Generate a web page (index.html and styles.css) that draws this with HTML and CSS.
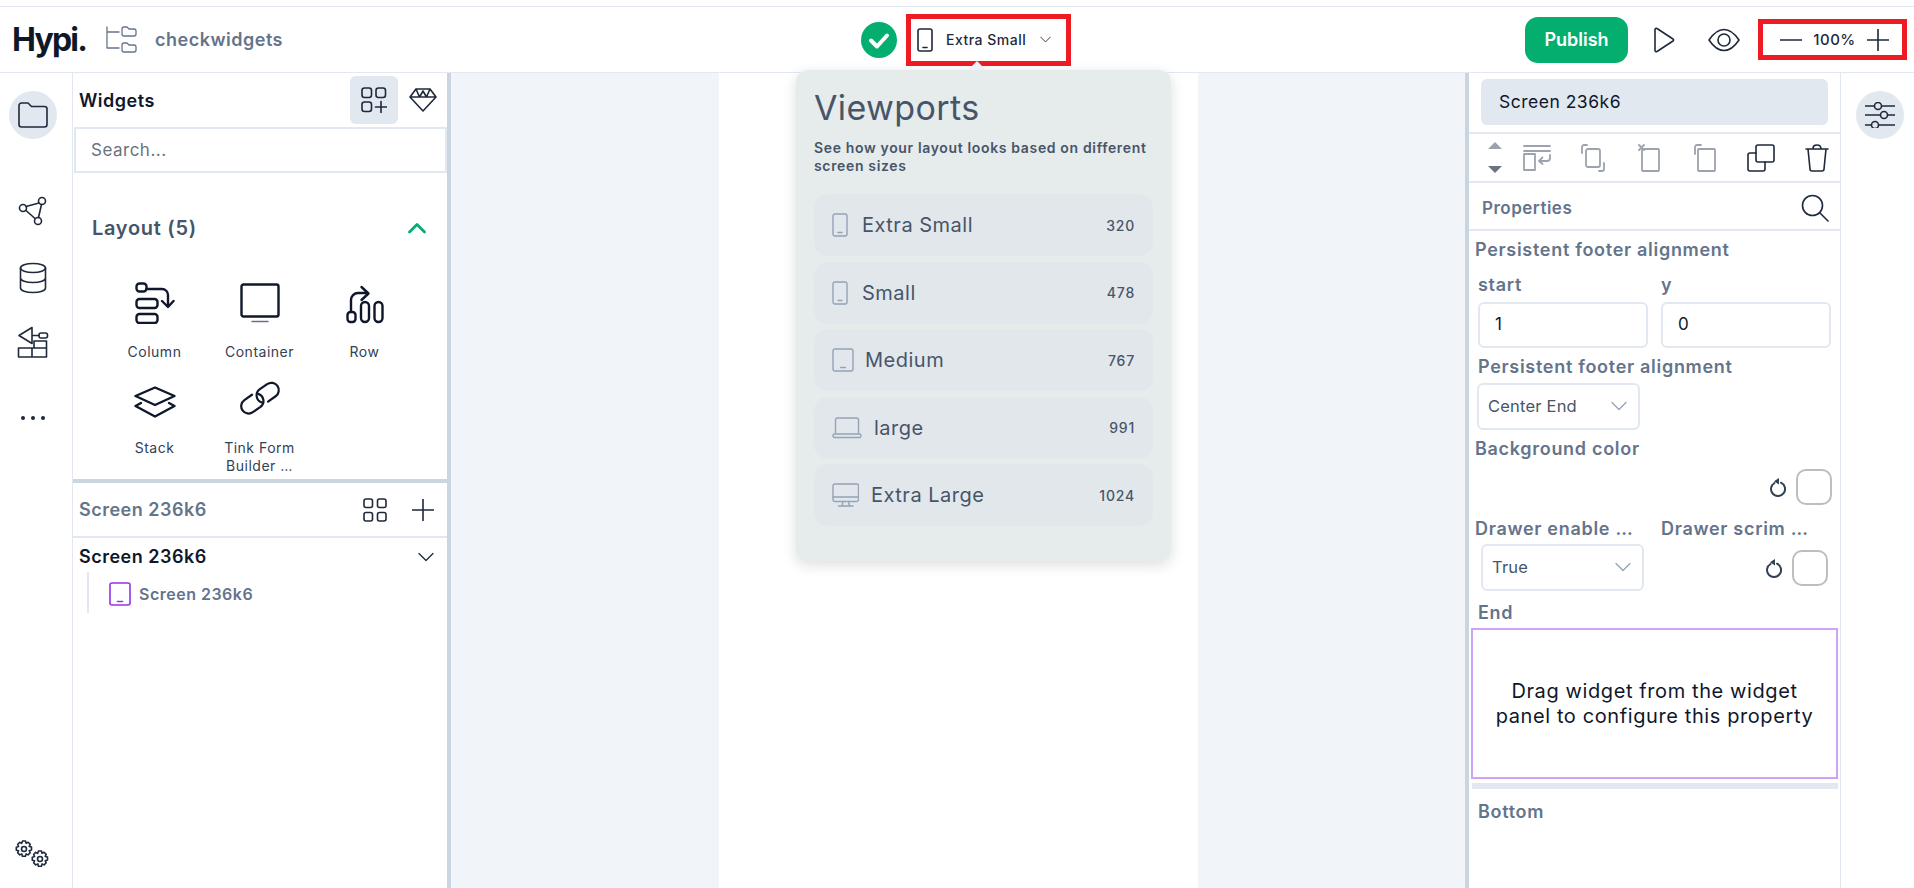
FILE: index.html
```html
<!DOCTYPE html>
<html lang="en">
<head>
    <meta charset="UTF-8">
    <title>Hypi Builder</title>
    <link rel="stylesheet" href="styles.css">
</head>
<body>
    <svg class="defs" width="0" height="0">
        <symbol id="phone" viewBox="0 0 16 24"><rect x="1" y="1" width="14" height="22" rx="2"/><path d="M6 19.500h4"/></symbol>
        <symbol id="tablet" viewBox="0 0 22 24"><rect x="1" y="1" width="20" height="22" rx="2"/><path d="M8.500 19.500h5"/></symbol>
        <symbol id="chev" viewBox="0 0 16 10"><path d="M1 1.500l7 7 7-7"/></symbol>
        <symbol id="reset" viewBox="0 0 18 20"><path d="M12 5.700A7 7 0 1 1 5.500 6"/><path fill="#334155" stroke="none" d="M10 1v6.500L5 4.200z"/></symbol>
    </svg>

    <div class="topline"></div>
    <header class="header">
        <div class="header-left">
            <span class="logo">Hypi.</span>
            <svg class="project-icon" width="32" height="28" viewBox="0 0 32 28"><path d="M2 1v21h12M2 6h12"/><path d="M17 3a2 2 0 0 1 2-2h3l2 2h5a2 2 0 0 1 2 2v3a2 2 0 0 1-2 2H19a2 2 0 0 1-2-2z"/><path d="M17 19a2 2 0 0 1 2-2h3l2 2h5a2 2 0 0 1 2 2v3a2 2 0 0 1-2 2H19a2 2 0 0 1-2-2z"/></svg>
            <span class="project-name">checkwidgets</span>
        </div>
        <div class="header-center">
            <svg class="check" width="36" height="36" viewBox="0 0 36 36"><circle cx="18" cy="18" r="18"/><path d="M10 18.500l6 6 10-11"/></svg>
            <div class="device-select">
                <svg class="ic-dark" width="16" height="24"><use href="#phone"/></svg>
                <span>Extra Small</span>
                <svg class="ic-dark thin" width="11" height="7"><use href="#chev"/></svg>
            </div>
        </div>
        <div class="header-right">
            <button class="publish">Publish</button>
            <svg class="ic-dark" width="22" height="26" viewBox="0 0 22 26"><path d="M2 2.500c0-1 1-1.500 2-1l16 10.500c.8.500.8 1.500 0 2L4 24.500c-1 .5-2 0-2-1z"/></svg>
            <svg class="ic-dark eye" width="32" height="24" viewBox="0 0 32 24"><path d="M1 12C6 4.500 11 1.500 16 1.500S26 4.500 31 12c-5 7.500-10 10.500-15 10.500S6 19.500 1 12z"/><circle cx="16" cy="12" r="6"/></svg>
            <div class="zoom-box">
                <svg class="ic-dark" width="22" height="22" viewBox="0 0 22 22"><path d="M0 11h22"/></svg>
                <span>100%</span>
                <svg class="ic-dark" width="22" height="22" viewBox="0 0 22 22"><path d="M0 11h22M11 0v22"/></svg>
            </div>
        </div>
    </header>

    <div class="main">
        <nav class="rail">
            <div class="rail-active">
                <svg class="ic-dark" width="30" height="26" viewBox="0 0 30 26"><path d="M1 3.500a2.500 2.500 0 0 1 2.500-2.500h6.500l3.500 3.500h13a2.500 2.500 0 0 1 2.500 2.500v15.500a2.500 2.500 0 0 1-2.500 2.500h-23a2.500 2.500 0 0 1-2.500-2.500z"/></svg>
            </div>
            <svg class="ic-dark rail-graph" width="30" height="30" viewBox="0 0 30 30"><circle cx="24" cy="5" r="3.500"/><circle cx="5" cy="12" r="3.500"/><circle cx="20" cy="25" r="3.500"/><path d="M21 7L8 10.500M23.500 8.500L20.500 21.500M8 14.500L17 22.500"/></svg>
            <svg class="ic-dark rail-db" width="28" height="32" viewBox="0 0 28 32"><ellipse cx="14" cy="6" rx="12.500" ry="4.500"/><path d="M1.500 6v20c0 2.500 5.500 4.500 12.500 4.500s12.500-2 12.500-4.500V6M1.500 16c0 2.500 5.500 4.500 12.500 4.500s12.500-2 12.500-4.500"/></svg>
            <svg class="ic-dark rail-deploy" width="32" height="32" viewBox="0 0 32 32"><path d="M15 1.500L2 9.500l13 8zM15 9.500h7"/><rect x="22" y="7" width="8.500" height="5" rx="2"/><path d="M1.500 22h28v9h-28zM15 22v9M17 22v-7h12.500v7"/></svg>
            <div class="rail-dots"><i></i><i></i><i></i></div>
            <svg class="ic-dark rail-gear" width="36" height="28" viewBox="0 0 36 28"><g id="gear"><circle cx="9" cy="9" r="2.500"/><path d="M7.500 1h3l.6 2.200 2-.9 2.100 2.100-1 2 2.300.7v3l-2.300.6 1 2.100-2.100 2.100-2-1-.7 2.300h-3l-.6-2.300-2.100 1-2.100-2.100 1-2.100L1.300 10.200v-3l2.300-.7-1-2 2.100-2.100 2 .9z"/></g><use href="#gear" x="16" y="10"/></svg>
        </nav>

        <aside class="widgets">
            <div class="widgets-head">
                <span class="widgets-title">Widgets</span>
                <div class="tab-active">
                    <svg class="ic-dark" width="26" height="26" viewBox="0 0 26 26"><rect x="1" y="1" width="9.500" height="9.500" rx="2.500"/><rect x="15" y="1" width="9.500" height="9.500" rx="2.500"/><rect x="1" y="15" width="9.500" height="9.500" rx="2.500"/><path d="M14.500 20h11M20 14.500v11"/></svg>
                </div>
                <svg class="ic-dark diamond" width="28" height="24" viewBox="0 0 28 24"><path d="M7 1h14l6 8-13 14L1 9zM1 9h26M7 1l3.500 8L14 3l3.500 6L21 1"/></svg>
            </div>
            <div class="search">Search...</div>
            <div class="section-head">
                <span>Layout (5)</span>
                <svg class="chev-up" width="18" height="12" viewBox="0 0 18 12"><path d="M1.500 10L9 2.500 16.500 10"/></svg>
            </div>
            <div class="widget-grid">
                <div class="widget">
                    <svg class="ic-widget" width="40" height="42" viewBox="0 0 40 42"><rect x="1.500" y="1.500" width="10" height="8" rx="3"/><rect x="1.500" y="17" width="21" height="9" rx="3"/><rect x="1.500" y="32" width="21" height="9" rx="3"/><path d="M11.500 7H27a6 6 0 0 1 6 6v11M27 19l6 6 5.500-6"/></svg>
                    <span>Column</span>
                </div>
                <div class="widget">
                    <svg class="ic-widget" width="40" height="42" viewBox="0 0 40 40"><rect x="1.500" y="1.500" width="37" height="32" rx="2"/><path class="thin" d="M12 38.500h16"/></svg>
                    <span>Container</span>
                </div>
                <div class="widget">
                    <svg class="ic-widget" width="38" height="42" viewBox="0 -5 38 42"><rect x="1.500" y="25" width="8" height="10" rx="3"/><rect x="15" y="15" width="8" height="20" rx="4"/><rect x="28.500" y="15" width="8" height="20" rx="4"/><path d="M5 24V13a7 7 0 0 1 7-7h10M15.500 0l7 6.500-7 6.500"/></svg>
                    <span>Row</span>
                </div>
                <div class="widget">
                    <svg class="ic-widget" width="42" height="42" viewBox="0 -7 42 42"><path d="M21 1.500L40.500 10 21 19 1.500 10zM7 17l-5.500 3L21 30.500 40.500 20 35 17"/></svg>
                    <span>Stack</span>
                </div>
                <div class="widget">
                    <svg class="ic-widget" width="50" height="42" viewBox="-2 -1 54 42"><g transform="rotate(-35 25 18)"><path d="M20 10H10a8 8 0 0 0 0 16h10a8 8 0 0 0 6-13"/><path d="M30 26h10a8 8 0 0 0 0-16H30a8 8 0 0 0-6 13"/></g></svg>
                    <span>Tink Form<br>Builder …</span>
                </div>
            </div>
            <div class="h-split"></div>
            <div class="screens-head">
                <span>Screen 236k6</span>
                <svg class="ic-dark" width="24" height="24" viewBox="0 0 24 24"><rect x="1" y="1" width="8.500" height="8.500" rx="2"/><rect x="14.500" y="1" width="8.500" height="8.500" rx="2"/><rect x="1" y="14.500" width="8.500" height="8.500" rx="2"/><rect x="14.500" y="14.500" width="8.500" height="8.500" rx="2"/></svg>
                <svg class="ic-dark plus" width="22" height="22" viewBox="0 0 22 22"><path d="M0 11h22M11 0v22"/></svg>
            </div>
            <div class="tree-row">
                <span>Screen 236k6</span>
                <svg class="ic-dark thin" width="16" height="10"><use href="#chev"/></svg>
            </div>
            <div class="tree-child">
                <svg class="ic-purple" width="22" height="24"><use href="#tablet"/></svg>
                <span>Screen 236k6</span>
            </div>
        </aside>

        <div class="v-split"></div>

        <section class="canvas">
            <div class="preview"></div>
            <div class="popover">
                <h2>Viewports</h2>
                <p>See how your layout looks based on different screen sizes</p>
                <div class="vp-item">
                    <svg class="ic-vp gap-phone" width="16" height="24"><use href="#phone"/></svg>
                    <span class="vp-name">Extra Small</span><span class="vp-size">320</span>
                </div>
                <div class="vp-item">
                    <svg class="ic-vp gap-phone" width="16" height="24"><use href="#phone"/></svg>
                    <span class="vp-name">Small</span><span class="vp-size">478</span>
                </div>
                <div class="vp-item">
                    <svg class="ic-vp" width="22" height="24"><use href="#tablet"/></svg>
                    <span class="vp-name">Medium</span><span class="vp-size">767</span>
                </div>
                <div class="vp-item">
                    <svg class="ic-vp gap-wide" width="30" height="22" viewBox="0 0 30 22"><path d="M3.500 16V3a2 2 0 0 1 2-2h19a2 2 0 0 1 2 2v13"/><rect x="1" y="17" width="28" height="3.500" rx="1.500"/></svg>
                    <span class="vp-name">large</span><span class="vp-size">991</span>
                </div>
                <div class="vp-item">
                    <svg class="ic-vp gap-wide" width="27" height="24" viewBox="0 0 27 24"><rect x="1" y="1" width="25.500" height="17.500" rx="2"/><path d="M1 14h25.500M11 18.500l-1 4.500M16.500 18.500l1 4.500M6.500 23h14.500"/></svg>
                    <span class="vp-name">Extra Large</span><span class="vp-size">1024</span>
                </div>
            </div>
        </section>

        <div class="v-split"></div>

        <aside class="props">
            <div class="name-wrap"><div class="name-box">Screen 236k6</div></div>
            <div class="toolbar">
                <div class="updown"><i class="up"></i><i class="down"></i></div>
                <svg class="ic-gray" width="28" height="28" viewBox="0 0 28 28"><path d="M1 2h26M1 7h26"/><rect x="1" y="10" width="11" height="16"/><path d="M27 11v3a3 3 0 0 1-3 3h-8M19.500 13.500L16 17l3.500 3"/></svg>
                <svg class="ic-gray" width="24" height="28" viewBox="0 0 24 28"><rect x="5" y="5" width="14" height="18" rx="2"/><path d="M6 1H3a2 2 0 0 0-2 2v6M18 27h3a2 2 0 0 0 2-2v-6"/></svg>
                <svg class="ic-gray" width="22" height="28" viewBox="0 0 22 28"><rect x="4" y="5" width="17" height="22" rx="1"/><path d="M1 1l5 5M6 1L1 6"/></svg>
                <svg class="ic-gray" width="22" height="28" viewBox="0 0 22 28"><rect x="4" y="5" width="17" height="22" rx="1"/><path d="M7 1H3a2 2 0 0 0-2 2v7"/></svg>
                <svg class="ic-dark" width="28" height="28" viewBox="0 0 28 28"><rect x="9" y="1" width="18" height="17" rx="2"/><path d="M9 9H3a2 2 0 0 0-2 2v14a2 2 0 0 0 2 2h13a2 2 0 0 0 2-2v-7"/></svg>
                <svg class="ic-dark" width="24" height="28" viewBox="0 0 24 28"><path d="M1 5h22M3 5l2 20a2 2 0 0 0 2 2h10a2 2 0 0 0 2-2l2-20M8 5c0-3 1-4 4-4s4 1 4 4"/></svg>
            </div>
            <div class="props-head">
                <span>Properties</span>
                <svg class="ic-dark" width="28" height="28" viewBox="0 0 28 28"><circle cx="11.500" cy="11.500" r="10"/><path d="M19 19l8 8"/></svg>
            </div>
            <div class="field-title">Persistent footer alignment</div>
            <div class="two-col">
                <div>
                    <div class="sub-label">start</div>
                    <div class="input">1</div>
                </div>
                <div>
                    <div class="sub-label">y</div>
                    <div class="input">0</div>
                </div>
            </div>
            <div class="sub-label second">Persistent footer alignment</div>
            <div class="select">
                <span>Center End</span>
                <svg class="ic-slate" width="16" height="10"><use href="#chev"/></svg>
            </div>
            <div class="field-title bg-title">Background color</div>
            <div class="color-row">
                <svg class="ic-reset" width="18" height="20"><use href="#reset"/></svg>
                <div class="swatch"></div>
            </div>
            <div class="drawer-labels">
                <span>Drawer enable …</span>
                <span>Drawer scrim …</span>
            </div>
            <div class="drawer-row">
                <div class="select">
                    <span>True</span>
                    <svg class="ic-slate" width="16" height="10"><use href="#chev"/></svg>
                </div>
                <svg class="ic-reset" width="18" height="20"><use href="#reset"/></svg>
                <div class="swatch"></div>
            </div>
            <div class="sub-label end-label">End</div>
            <div class="drop-box">Drag widget from the widget panel to configure this property</div>
            <div class="drop-bar"></div>
            <div class="sub-label bottom-label">Bottom</div>
        </aside>

        <nav class="rail-right">
            <div class="rail-active">
                <svg class="ic-dark" width="30" height="26" viewBox="0 0 30 26"><path d="M0 4h9M17 4h13M0 13h15M23 13h7M0 23h6M14 23h16"/><circle cx="13" cy="4" r="3.500"/><circle cx="19" cy="13" r="3.500"/><circle cx="10" cy="23" r="3.500"/></svg>
            </div>
        </nav>
    </div>
</body>
</html>
```

FILE: styles.css
```css
* {
    box-sizing: border-box;
}
body {
    margin: 0;
    height: 888px;
    overflow: hidden;
    font-family: Inter, "Liberation Sans", sans-serif;
    letter-spacing: 0.5px;
    background-color: #fff;
    color: #0f172a;
}
svg {
    display: block;
    flex-shrink: 0;
    fill: none;
    stroke-linecap: round;
    stroke-linejoin: round;
}
.defs {
    position: absolute;
}
.ic-dark {
    stroke: #1e293b;
    stroke-width: 1.6;
}
.ic-dark.thin {
    stroke-width: 1.3;
}
.ic-gray {
    stroke: #9ca3af;
    stroke-width: 1.8;
}
.ic-slate {
    stroke: #94a3b8;
    stroke-width: 1.3;
}
.ic-reset {
    stroke: #334155;
    stroke-width: 2;
}
.ic-purple {
    stroke: #9333ea;
    stroke-width: 1.6;
}
.ic-vp {
    stroke: #94a3b8;
    stroke-width: 1.4;
}
.ic-widget {
    stroke: #0f172a;
    stroke-width: 2.4;
}
.ic-widget .thin {
    stroke: #64748b;
    stroke-width: 1.5;
}

/* Header */
.topline {
    height: 7px;
    border-bottom: 1px solid #e2e8f0;
}
.header {
    display: flex;
    align-items: center;
    height: 66px;
    border-bottom: 1px solid #e2e8f0;
}
.header-left {
    display: flex;
    align-items: center;
    width: 861px;
    padding-left: 12px;
}
.logo {
    font-size: 32px;
    font-weight: 700;
    letter-spacing: -1.8px;
    color: #0f172a;
}
.project-icon {
    margin-left: 19px;
    stroke: #64748b;
    stroke-width: 1.3;
}
.project-name {
    margin-left: 18px;
    font-size: 18px;
    font-weight: 600;
    color: #64748b;
}
.header-center {
    display: flex;
    align-items: center;
    gap: 9px;
}
.check circle {
    fill: #04ae6e;
}
.check path {
    stroke: #fff;
    stroke-width: 4;
}
.device-select {
    display: flex;
    align-items: center;
    width: 165px;
    height: 52px;
    padding-left: 6px;
    border: 5px solid #ed1c24;
    font-size: 14px;
    font-weight: 500;
    color: #1e293b;
}
.device-select span {
    margin-left: 13px;
    margin-right: 14px;
}
.header-right {
    display: flex;
    align-items: center;
    margin-left: auto;
    padding-right: 7px;
}
.publish {
    width: 103px;
    height: 46px;
    margin-right: 25px;
    border: none;
    border-radius: 13px;
    background-color: #04ae6e;
    color: #fff;
    font-family: inherit;
    font-size: 18px;
    font-weight: 600;
}
.eye {
    margin-left: 33px;
    margin-right: 18px;
}
.zoom-box {
    display: flex;
    align-items: center;
    justify-content: space-between;
    width: 149px;
    height: 41px;
    padding: 0 13px 0 17px;
    border: 5px solid #ed1c24;
    font-size: 15px;
    font-weight: 500;
    color: #1e293b;
}

.main {
    display: flex;
    height: 815px;
}

/* Left rail */
.rail {
    display: flex;
    flex-direction: column;
    flex-shrink: 0;
    align-items: center;
    width: 73px;
    padding: 18px 6px 20px 0;
    border-right: 1px solid #e2e8f0;
}
.rail-active {
    display: flex;
    align-items: center;
    justify-content: center;
    width: 48px;
    height: 48px;
    border-radius: 50%;
    background-color: #e2e8f0;
}
.rail-graph {
    margin-top: 57px;
}
.rail-db {
    margin-top: 36px;
}
.rail-deploy {
    margin-top: 32px;
}
.rail-dots {
    display: flex;
    gap: 6px;
    margin-top: 58px;
}
.rail-dots i {
    width: 4px;
    height: 4px;
    border-radius: 50%;
    background-color: #1e293b;
}
.rail-gear {
    margin-top: auto;
}

/* Widgets panel */
.widgets {
    flex-shrink: 0;
    width: 374px;
}
.widgets-head {
    display: flex;
    align-items: center;
    height: 54px;
    padding-left: 6px;
}
.widgets-title {
    flex: 1;
    font-size: 18px;
    font-weight: 600;
    color: #0f172a;
}
.tab-active {
    display: flex;
    align-items: center;
    justify-content: center;
    width: 48px;
    height: 48px;
    margin-right: 11px;
    border-radius: 6px;
    background-color: #e2e8f0;
}
.diamond {
    margin-right: 10px;
}
.search {
    height: 46px;
    margin-left: 1px;
    padding: 11px 0 0 15px;
    border: 2px solid #e2e8f0;
    font-size: 17px;
    color: #6b7280;
}
.section-head {
    display: flex;
    align-items: center;
    justify-content: space-between;
    height: 38px;
    margin-top: 36px;
    padding: 0 21px 0 19px;
    font-size: 20px;
    font-weight: 600;
    letter-spacing: 0.7px;
    color: #475569;
}
.chev-up {
    stroke: #04ae6e;
    stroke-width: 2.800;
}
.widget-grid {
    display: grid;
    grid-template-columns: repeat(3, 105px);
    grid-auto-rows: 97px;
    height: 197px;
    margin: 35px 0 0 29px;
}
.widget {
    display: flex;
    flex-direction: column;
    align-items: center;
    gap: 19px;
    font-size: 14px;
    line-height: 18px;
    color: #334155;
    text-align: center;
}
.widget:nth-child(n+4) {
    gap: 18px;
}
.h-split {
    height: 4px;
    background-color: #cbd5e1;
}
.screens-head {
    display: flex;
    align-items: center;
    height: 55px;
    padding-left: 6px;
    border-bottom: 2px solid #e2e8f0;
    font-size: 18px;
    font-weight: 600;
    color: #64748b;
}
.screens-head span {
    flex: 1;
}
.plus {
    margin-left: 25px;
    margin-right: 13px;
}
.tree-row {
    display: flex;
    align-items: center;
    justify-content: space-between;
    height: 31px;
    margin-top: 3px;
    padding: 0 13px 0 6px;
    font-size: 18px;
    font-weight: 600;
    color: #0f172a;
}
.tree-child {
    display: flex;
    align-items: center;
    gap: 8px;
    height: 41px;
    margin-left: 14px;
    padding: 3px 0 0 20px;
    border-left: 2px solid #e2e8f0;
    font-size: 16px;
    font-weight: 600;
    color: #64748b;
}

.v-split {
    flex-shrink: 0;
    width: 4px;
    background-color: #cbd5e1;
}

/* Canvas + popover */
.canvas {
    position: relative;
    display: flex;
    justify-content: center;
    flex: 1;
    background-color: #f1f5f9;
}
.preview {
    width: 479px;
    background-color: #fff;
}
.popover {
    position: absolute;
    left: 345px;
    top: -3px;
    width: 375px;
    height: 491px;
    padding: 16px 18px 0;
    border-radius: 12px;
    background-color: #e6ebec;
    box-shadow: 0 4px 14px rgba(15, 23, 42, 0.14);
}
.popover::before {
    content: "";
    position: absolute;
    left: 172px;
    top: -18px;
    border: 9px solid transparent;
    border-bottom-color: #eef2f7;
}
.popover h2 {
    margin: 0;
    font-size: 34px;
    line-height: 44px;
    font-weight: 400;
    letter-spacing: 0.4px;
    color: #475569;
}
.popover p {
    margin: 9px 0 19px;
    font-size: 14px;
    line-height: 18px;
    font-weight: 600;
    letter-spacing: 0.65px;
    color: #475569;
}
.vp-item {
    display: flex;
    align-items: center;
    gap: 11px;
    height: 62px;
    margin-bottom: 5.600px;
    padding: 0 18px;
    border-radius: 14px;
    background-color: #e2e7ec;
}
.gap-phone {
    margin-right: 3px;
}
.gap-wide {
    margin-right: 1px;
}
.vp-name {
    flex: 1;
    font-size: 20px;
    color: #475569;
}
.vp-size {
    font-size: 14px;
    font-weight: 500;
    letter-spacing: 0.8px;
    color: #475569;
}

/* Properties panel */
.props {
    flex-shrink: 0;
    width: 372px;
    border-right: 1px solid #e2e8f0;
}
.name-wrap {
    height: 61px;
    padding: 6px 12px 0 12px;
    border-bottom: 2px solid #e2e8f0;
}
.name-box {
    height: 46px;
    padding-left: 18px;
    border-radius: 6px;
    background-color: #e2e8f0;
    font-size: 17.500px;
    line-height: 46px;
    color: #0f172a;
}
.toolbar {
    display: grid;
    grid-template-columns: 29px repeat(6, 56px);
    justify-items: center;
    align-items: center;
    height: 49px;
    padding-left: 11px;
    border-bottom: 2px solid #e2e8f0;
}
.updown {
    display: flex;
    flex-direction: column;
    gap: 17px;
}
.updown i {
    width: 0;
    height: 0;
    border-left: 7px solid transparent;
    border-right: 7px solid transparent;
}
.up {
    border-bottom: 7px solid #9ca3af;
}
.down {
    border-top: 7px solid #6b7280;
}
.props-head {
    display: flex;
    align-items: center;
    justify-content: space-between;
    height: 48px;
    padding: 3px 11px 0 13px;
    border-bottom: 2px solid #e2e8f0;
    font-size: 17px;
    font-weight: 600;
    color: #64748b;
}
.field-title {
    margin: 8px 0 0 6px;
    font-size: 18px;
    line-height: 22px;
    font-weight: 600;
    letter-spacing: 0.7px;
    color: #64748b;
}
.sub-label {
    margin-left: 9px;
    font-size: 18px;
    line-height: 22px;
    font-weight: 600;
    letter-spacing: 0.7px;
    color: #64748b;
}
.two-col {
    display: flex;
    gap: 13px;
    margin: 13px 0 0;
    padding-left: 9px;
}
.two-col .sub-label {
    margin-left: 0;
}
.input {
    width: 170px;
    height: 46px;
    margin-top: 6px;
    padding-left: 15px;
    border: 2px solid #e2e8f0;
    border-radius: 6px;
    font-size: 17px;
    line-height: 40px;
    color: #0f172a;
}
.second {
    margin-top: 8px;
}
.select {
    display: flex;
    align-items: center;
    justify-content: space-between;
    width: 163px;
    height: 47px;
    margin: 5px 0 0 8px;
    padding: 0 11px 2px 9px;
    border: 2px solid #e2e8f0;
    border-radius: 6px;
    font-size: 16.500px;
    letter-spacing: 0.2px;
    color: #475569;
}
.bg-title {
    margin-top: 8px;
}
.color-row {
    display: flex;
    align-items: center;
    justify-content: flex-end;
    gap: 9px;
    margin-top: 9px;
    padding-right: 8px;
}
.swatch {
    width: 36px;
    height: 36px;
    border: 2px solid #bdbdbd;
    border-radius: 10px;
}
.drawer-labels {
    display: flex;
    margin: 13px 0 0 6px;
    font-size: 18px;
    line-height: 22px;
    font-weight: 600;
    letter-spacing: 0.7px;
    color: #64748b;
}
.drawer-labels span:first-child {
    width: 186px;
}
.drawer-row {
    display: flex;
    align-items: center;
    gap: 9px;
    margin-top: 4px;
    padding-right: 12px;
}
.drawer-row .select {
    margin: 0 auto 0 12px;
}
.end-label {
    margin-top: 11px;
}
.drop-box {
    display: flex;
    align-items: center;
    justify-content: center;
    height: 151px;
    margin: 4px 2px 0 2px;
    padding: 0 20px;
    border: 2px solid #cfa3f3;
    font-size: 20px;
    line-height: 25px;
    letter-spacing: 0.6px;
    text-align: center;
    color: #0f172a;
}
.drop-bar {
    height: 6px;
    margin: 4px 2px 0 3px;
    background-color: #e2e8f0;
}
.bottom-label {
    margin-top: 12px;
}

.rail-right {
    display: flex;
    flex-shrink: 0;
    justify-content: center;
    width: 73px;
    padding: 18px 0 0 5px;
}
```
